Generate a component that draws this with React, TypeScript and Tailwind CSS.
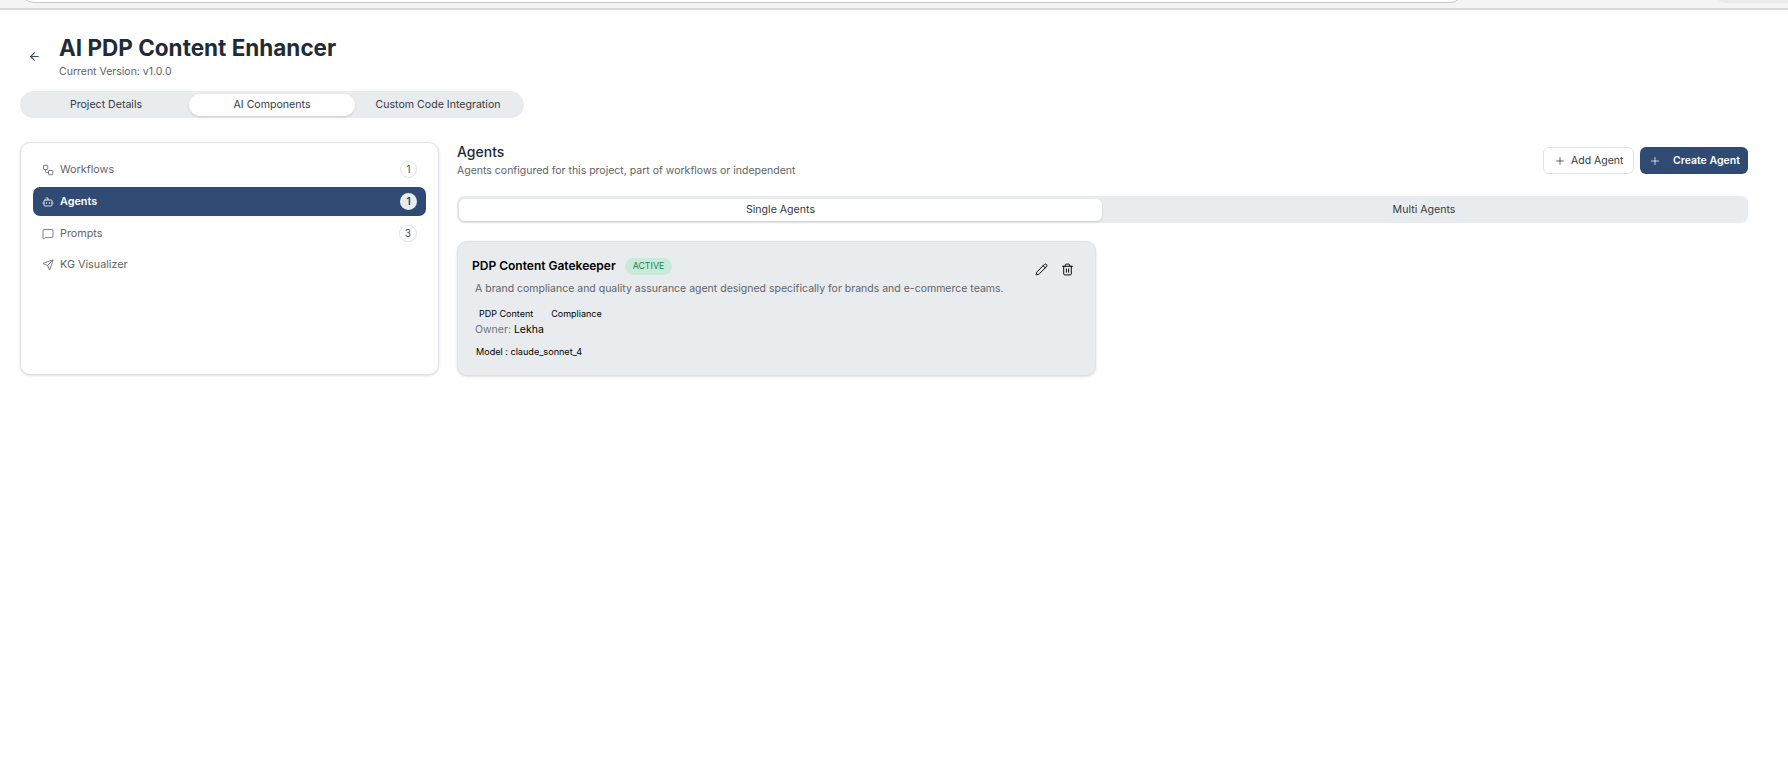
import React from "react";
import { ArrowLeft, Bot, MessageSquare, Pencil, Plus, Send, Trash2 } from "lucide-react";

function WorkflowIcon({ size, strokeWidth, className }: { size: number; strokeWidth: number; className?: string }) {
  return (
    <svg width={size} height={size} viewBox="0 0 24 24" fill="none" stroke="currentColor" strokeWidth={strokeWidth} className={className}>
      <rect x="3" y="2.5" width="8.5" height="8.5" rx="1" />
      <path d="M7 11v4a2 2 0 0 0 2 2h4" />
      <rect x="13" y="13" width="8.5" height="8.5" rx="1" />
    </svg>
  );
}

const nav = [
  { label: "Workflows", Icon: WorkflowIcon, count: "1" },
  { label: "Agents", Icon: Bot, count: "1", active: true },
  { label: "Prompts", Icon: MessageSquare, count: "3" },
  { label: "KG Visualizer", Icon: Send },
];

export default function App() {
  return (
    <div className="min-h-[779px] bg-white font-['Inter',sans-serif] text-[#212b36]">
      <div className="h-[10px] overflow-hidden border-b-2 border-[#d9d9d9] bg-[#f4f4f4] pl-5 pr-0">
        <div className="flex justify-between">
          <div className="-mt-5 h-[23px] w-[1444px] rounded-b-[14px] border border-[#c9c9c9] bg-white" />
          <div className="-mt-5 h-[23px] w-[73px] rounded-bl-[10px] bg-[#ebebeb]" />
        </div>
      </div>

      <div className="pl-5 pr-10">
        <header className="flex items-center pt-[23px]">
          <button className="mt-[1px] flex w-[39px] justify-start pl-[8px] text-[#454f5b]">
            <ArrowLeft size={13} strokeWidth={2} />
          </button>
          <div>
            <h1 className="text-[22.5px] font-bold leading-[30px] text-[#212b36]">AI PDP Content Enhancer</h1>
            <p className="mt-[2px] text-[10.5px] leading-[14px] text-[#5f6368]">Current Version: v1.0.0</p>
          </div>
        </header>

        <div className="mt-[12px] flex h-[27px] w-[504px] items-center rounded-full bg-[#e9ecef] px-[3px] text-[10.6px] text-[#343a40]">
          <div className="w-[166px] text-center">Project Details</div>
          <div className="flex h-[22px] w-[166px] items-center justify-center rounded-full bg-white shadow-sm">AI Components</div>
          <div className="flex-1 text-center">Custom Code Integration</div>
        </div>

        <div className="mt-[24px] flex items-start gap-[18px]">
          <aside className="h-[233px] w-[419px] shrink-0 rounded-[10px] border border-[#dee2e6] bg-white px-3 pt-[12px] shadow-sm">
            <nav className="flex flex-col">
              {nav.map(({ label, Icon, count, active }) => (
                <div
                  key={label}
                  className={`flex h-[29px] items-center rounded-[7px] pl-[9px] pr-[9px] text-[10.8px] ${
                    active ? "mb-[3px] mt-[3px] bg-[#2f4b74] font-semibold text-white" : "text-[#5f6368]"
                  } ${label === "KG Visualizer" ? "mt-[2px]" : ""}`}
                >
                  <Icon size={12} strokeWidth={1.6} className="shrink-0" />
                  <span className="ml-[6px] flex-1 pt-[2px]">{label}</span>
                  {count && (
                    <span
                      className={`flex h-[17px] min-w-[17px] items-center justify-center rounded-full px-[5px] text-[10px] ${
                        active ? "bg-[#e9ecef] text-[#343a40]" : "border border-[#dee2e6] bg-white text-[#495057]"
                      }`}
                    >
                      {count}
                    </span>
                  )}
                </div>
              ))}
            </nav>
          </aside>

          <main className="min-w-0 flex-1">
            <div className="flex h-[34px] items-start justify-between">
              <div className="pt-[1px]">
                <h2 className="text-[14px] font-medium leading-[18px] text-[#212b36]">Agents</h2>
                <p className="mt-[3px] text-[10.5px] leading-[14px] text-[#5f6368]">Agents configured for this project, part of workflows or independent</p>
              </div>
              <div className="mt-[5px] flex gap-[6px]">
                <button className="flex h-[27px] w-[91px] items-center rounded-[6px] border border-[#dee2e6] bg-white pl-[10px] text-[10.5px] font-normal text-[#343a40]">
                  <Plus size={12} strokeWidth={1.5} />
                  <span className="ml-[5px]">Add Agent</span>
                </button>
                <button className="flex h-[27px] w-[108px] items-center rounded-[6px] bg-[#2f4b74] pl-[9px] text-[10.5px] font-semibold text-white">
                  <Plus size={12} strokeWidth={1.5} />
                  <span className="ml-[12px]">Create Agent</span>
                </button>
              </div>
            </div>

            <div className="mt-[20px] flex h-[27px] items-center rounded-[7px] bg-[#e9ecef] px-[2px] text-[10.6px] text-[#343a40]">
              <div className="flex h-[22px] w-[643px] items-center justify-center rounded-[6px] bg-white shadow-sm">Single Agents</div>
              <div className="flex-1 text-center">Multi Agents</div>
            </div>

            <article className="mt-[18px] h-[135px] w-[639px] rounded-[10px] border border-[#dee2e6] bg-[#e9ecef] pl-[14px] pr-[21px] pt-[15px] shadow-sm">
              <div className="flex items-start justify-between">
                <div>
                  <div className="flex items-center">
                    <h3 className="text-[12px] font-semibold leading-[18px] text-black">PDP Content Gatekeeper</h3>
                    <span className="ml-[9px] flex h-[17px] items-center rounded-full bg-[#c9ead8] px-[8px] text-[8.8px] font-normal text-[#1a7f4e]">ACTIVE</span>
                  </div>
                  <p className="ml-[3px] mt-[7px] text-[10.5px] leading-[14px] text-[#5f6368]">A brand compliance and quality assurance agent designed specifically for brands and e-commerce teams.</p>
                </div>
                <div className="mt-[6px] flex gap-[13px] text-black">
                  <Pencil size={13} strokeWidth={1.8} />
                  <Trash2 size={13} strokeWidth={1.8} />
                </div>
              </div>
              <div className="ml-[7px] mt-[12px] flex gap-[18px] text-[9px] font-normal leading-[12px] text-black">
                <span>PDP Content</span>
                <span>Compliance</span>
              </div>
              <p className="ml-[3px] mt-[3px] text-[10.5px] leading-[14px] text-[#6c757d]">
                Owner: <span className="font-normal text-black">Lekha</span>
              </p>
              <p className="ml-[4px] mt-[9px] text-[9.1px] font-normal leading-[12px] text-black">Model : claude_sonnet_4</p>
            </article>
          </main>
        </div>
      </div>
    </div>
  );
}
